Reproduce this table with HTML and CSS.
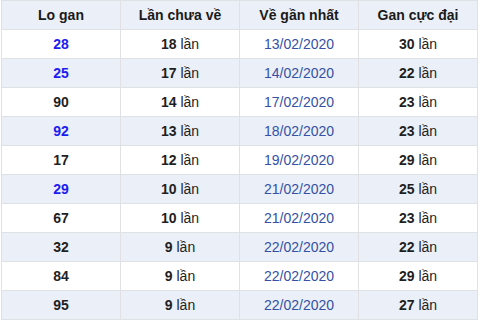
FILE: index.html
```html
<!DOCTYPE html>
<html lang="vi">
<head>
    <meta charset="UTF-8">
    <meta name="viewport" content="width=device-width, initial-scale=1.0">
    <title>Thống kê lô gan</title>
    <link rel="stylesheet" href="styles.css">
</head>
<body>

    <table class="gan-table">
        <thead>
            <tr>
                <th>Lo gan</th>
                <th>Lần chưa về</th>
                <th>Về gần nhất</th>
                <th>Gan cực đại</th>
            </tr>
        </thead>
        <tbody>
            <tr>
                <td class="so so-xanh">28</td>
                <td><b>18</b> lần</td>
                <td class="ngay">13/02/2020</td>
                <td><b>30</b> lần</td>
            </tr>
            <tr>
                <td class="so so-xanh">25</td>
                <td><b>17</b> lần</td>
                <td class="ngay">14/02/2020</td>
                <td><b>22</b> lần</td>
            </tr>
            <tr>
                <td class="so">90</td>
                <td><b>14</b> lần</td>
                <td class="ngay">17/02/2020</td>
                <td><b>23</b> lần</td>
            </tr>
            <tr>
                <td class="so so-xanh">92</td>
                <td><b>13</b> lần</td>
                <td class="ngay">18/02/2020</td>
                <td><b>23</b> lần</td>
            </tr>
            <tr>
                <td class="so">17</td>
                <td><b>12</b> lần</td>
                <td class="ngay">19/02/2020</td>
                <td><b>29</b> lần</td>
            </tr>
            <tr>
                <td class="so so-xanh">29</td>
                <td><b>10</b> lần</td>
                <td class="ngay">21/02/2020</td>
                <td><b>25</b> lần</td>
            </tr>
            <tr>
                <td class="so">67</td>
                <td><b>10</b> lần</td>
                <td class="ngay">21/02/2020</td>
                <td><b>23</b> lần</td>
            </tr>
            <tr>
                <td class="so">32</td>
                <td><b>9</b> lần</td>
                <td class="ngay">22/02/2020</td>
                <td><b>22</b> lần</td>
            </tr>
            <tr>
                <td class="so">84</td>
                <td><b>9</b> lần</td>
                <td class="ngay">22/02/2020</td>
                <td><b>29</b> lần</td>
            </tr>
            <tr>
                <td class="so">95</td>
                <td><b>9</b> lần</td>
                <td class="ngay">22/02/2020</td>
                <td><b>27</b> lần</td>
            </tr>
        </tbody>
    </table>

</body>
</html>
```

FILE: styles.css
```css
body {
    margin: 0;
    padding: 0 2px 0 1px;
    background-color: #ffffff;
    font-family: "Liberation Sans", Arial, sans-serif;
}

.gan-table {
    width: 100%;
    border-collapse: collapse;
    table-layout: fixed;
    font-size: 14px;
    color: #1f1f1f;
}

.gan-table th,
.gan-table td {
    height: 28px;
    padding: 0;
    text-align: center;
    border: 1px solid #dfe1e5;
}

.gan-table th {
    background-color: #eaeff8;
    font-size: 14px;
    font-weight: bold;
    color: #1a1a1a;
}

/* hàng chẵn nền xanh nhạt */
.gan-table tbody tr:nth-child(even) td {
    background-color: #eaeff8;
}

.gan-table .so {
    font-weight: bold;
}

.gan-table .so-xanh {
    color: #1c1cf0;
}

.gan-table .ngay {
    color: #3550a6;
}
```
